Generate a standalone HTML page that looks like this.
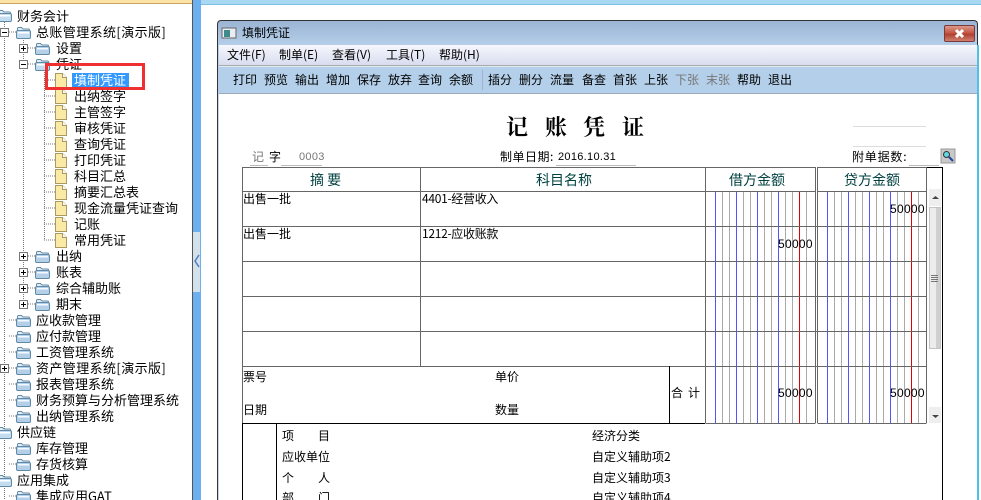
<!DOCTYPE html>
<html><head><meta charset="utf-8">
<style>
html,body{margin:0;padding:0;background:#fff}
#r{position:relative;width:981px;height:500px;overflow:hidden;background:#fff;font-family:"WenQuanYi Zen Hei","Noto Sans CJK SC","Liberation Sans",sans-serif;color:#000}
#r span{position:absolute;white-space:pre;line-height:16px;height:16px;font-size:12px}
.b{position:absolute}
.n span{font-size:13px!important}
.h{color:#004040;font-size:14px!important}
.d{color:#777}
.l{font-family:"Liberation Sans",sans-serif!important;letter-spacing:.3px}
.tt{height:24px!important;line-height:24px!important;font-size:22px!important;font-weight:bold;font-family:"Noto Serif CJK SC","Liberation Serif",serif!important}
svg{position:absolute;left:0;top:0}
</style></head><body><div id="r">
<div class="b" style="left:0;top:0;width:192px;height:3px;background:#fbe3a8"></div>
<div class="b" style="left:0;top:3px;width:192px;height:1px;background:#c8a860"></div>
<div class="b" style="left:192px;top:0;width:9px;height:500px;background:#6cb0f0;border-left:1px solid #555;box-sizing:border-box"></div>
<div class="b" style="left:193px;top:232px;width:7px;height:60px;background:#d4e0ea"></div>
<div class="b" style="left:201px;top:0;width:780px;height:4px;background:#a9d8f2;border-bottom:1px solid #7cc0e4"></div>
<div class="b" style="left:217px;top:20px;width:761px;height:480px;border:1px solid #333;border-bottom:0;border-radius:4px 4px 0 0;box-sizing:border-box;background:linear-gradient(#9bb4d4,#b6d0ea 25px)"></div>
<div class="b" style="left:219px;top:45px;width:758px;height:20px;background:linear-gradient(#f6f8fd,#d8dcef)"></div>
<div class="b" style="left:219px;top:65px;width:758px;height:1px;background:#aaa"></div>
<div class="b" style="left:219px;top:66px;width:758px;height:27px;background:#b3cfe9;border-top:1px solid #dfe8f4;box-sizing:border-box"></div>
<div class="b" style="left:219px;top:93px;width:758px;height:407px;background:#fff;border-top:1px solid #9ab"></div>
<div class="b" style="left:977px;top:45px;width:2px;height:455px;background:#4fc0ea"></div>
<div class="b" style="left:218px;top:94px;width:1px;height:406px;background:#c5d8ea"></div>
<div class="b" style="left:944px;top:25px;width:31px;height:17px;box-sizing:border-box;border:1px solid #7a3a3a;border-radius:2px;background:linear-gradient(#dc9a8c,#c0503c 50%,#b04030 55%,#d08070)"></div>

<svg width="981" height="500" shape-rendering="crispEdges">
<defs>
<symbol id="f" width="15" height="12" viewBox="0 0 15 12"><path d="M1.500 3.500V1.500a1 1 0 0 1 1-1h3l1.500 1.500h5.500a1 1 0 0 1 1 1v1" fill="#e6eef5" stroke="#5f8aa6" shape-rendering="auto"/><rect x=".5" y="3.500" width="14" height="8" rx="1.500" fill="#b4d0e8" stroke="#5f8aa6" shape-rendering="auto"/><path d="M2 5h11v1.500H2z" fill="#f4f9fd"/></symbol>
<symbol id="o" width="15" height="12" viewBox="0 0 15 12"><path d="M1.500 3.500V1.500a1 1 0 0 1 1-1h3l1.500 1.500h5.500a1 1 0 0 1 1 1v1" fill="#e6eef5" stroke="#5f8aa6" shape-rendering="auto"/><rect x=".5" y="3.500" width="14" height="8" rx="1.500" fill="#c4dcf0" stroke="#5f8aa6" shape-rendering="auto"/><path d="M2 5h11v1.500H2z" fill="#fff"/></symbol>
<symbol id="p" width="12" height="15" viewBox="0 0 12 15"><path d="M.5.5h7l4 4v10H.5z" fill="#fbe9a6" stroke="#a89a60"/><path d="M7.500.5v4h4" fill="#fff" stroke="#a89a60"/></symbol>
<symbol id="x" width="9" height="9" viewBox="0 0 9 9"><rect x=".5" y=".5" width="8" height="8" fill="#fff" stroke="#777"/><path d="M2 4.500h5M4.500 2v5" stroke="#000" fill="none"/></symbol>
<symbol id="m" width="9" height="9" viewBox="0 0 9 9"><rect x=".5" y=".5" width="8" height="8" fill="#fff" stroke="#777"/><path d="M2 4.500h5" stroke="#000" fill="none"/></symbol>
</defs>
<g stroke="#777" stroke-dasharray="1 1" fill="none">
<path d="M4.500 20V500M23.500 36V304M44.500 70V240"/>
<path d="M9 32h7M9 320h7M9 336h7M9 352h7M9 368h7M9 384h7M9 400h7M9 416h7M9 448h7M9 464h7M9 496h7"/>
<path d="M28 48h7M28 64h7M28 256h7M28 272h7M28 288h7M28 304h7"/>
<path d="M44 80h11M44 96h11M44 112h11M44 128h11M44 144h11M44 160h11M44 176h11M44 192h11M44 208h11M44 224h11M44 240h11"/>
</g>
<use href="#o" x="-3" y="10"/><use href="#o" x="16" y="27"/><use href="#f" x="35" y="43"/><use href="#o" x="35" y="59"/>
<use href="#f" x="35" y="251"/><use href="#f" x="35" y="267"/><use href="#f" x="35" y="283"/><use href="#f" x="35" y="299"/>
<use href="#f" x="16" y="315"/><use href="#f" x="16" y="331"/><use href="#f" x="16" y="347"/><use href="#f" x="16" y="363"/><use href="#f" x="16" y="379"/><use href="#f" x="16" y="395"/><use href="#f" x="16" y="411"/>
<use href="#o" x="-3" y="427"/><use href="#f" x="16" y="443"/><use href="#f" x="16" y="459"/><use href="#o" x="-3" y="475"/><use href="#f" x="16" y="491"/>
<use href="#p" x="55" y="73"/><use href="#p" x="55" y="89"/><use href="#p" x="55" y="105"/><use href="#p" x="55" y="121"/><use href="#p" x="55" y="137"/><use href="#p" x="55" y="153"/><use href="#p" x="55" y="169"/><use href="#p" x="55" y="185"/><use href="#p" x="55" y="201"/><use href="#p" x="55" y="217"/><use href="#p" x="55" y="233"/>
<use href="#m" x="0" y="28"/><use href="#x" x="19" y="44"/><use href="#m" x="19" y="60"/><use href="#x" x="19" y="252"/><use href="#x" x="19" y="268"/><use href="#x" x="19" y="284"/><use href="#x" x="19" y="300"/><use href="#x" x="0" y="364"/>
<rect x="72" y="73" width="57" height="16" fill="#3399ff"/>

<rect x="222" y="28" width="14" height="10" fill="#e8eef2" stroke="#666"/><rect x="224" y="30" width="6" height="7" fill="#3f8a8a"/>
<rect x="482" y="70" width="1" height="20" fill="#a8b0d0"/>

<g fill="none" stroke="#ddd"><path d="M853 126.500h73M853 146.500h73"/></g>
<g fill="none" stroke="#bbb"><path d="M250 165.500h18M281 165.500h41M556 165.500h80M909 165.500h30"/></g>

<g fill="none" stroke="#aaa">
<path d="M722.500 191V423M729.500 191V423M743.500 191V423M750.500 191V423M764.500 191V423M771.500 191V423M785.500 191V423M792.500 191V423M806.500 191V423M834.500 191V423M841.500 191V423M855.500 191V423M862.500 191V423M876.500 191V423M883.500 191V423M897.500 191V423M904.500 191V423M918.500 191V423"/>
</g>
<g fill="none" stroke="#5555ff"><path d="M715.500 191V423M736.500 191V423M757.500 191V423M778.500 191V423M827.500 191V423M848.500 191V423M869.500 191V423M890.500 191V423"/></g>
<g fill="none" stroke="#e00000"><path d="M799.500 191V423M911.500 191V423"/></g>
<g fill="none" stroke="#666">
<path d="M242.500 167.500H815.500M817.500 167.500H926.500M242.500 191.500H815.500M817.500 191.500H926.500M242.500 226.500H926.500M242.500 261.500H926.500M242.500 296.500H926.500M242.500 331.500H926.500M242.500 366.500H926.500M705.500 423.500H815.500M817.500 423.500H926.500"/>
<path d="M242.500 167V423M420.500 167V366M705.500 167V423M815.500 167V423M817.500 167V423M926.500 167V423"/>
</g>
<path d="M669.500 366V423" stroke="#000"/>
<path d="M243 423.500H705M242.500 423V500M276.500 423V500M942.500 167V500M927 167.500H942" stroke="#000" fill="none"/>

<rect x="929" y="189" width="12" height="17" fill="#eee"/><path d="M932 199h7l-3.500-3z" fill="#444" shape-rendering="auto"/>
<rect x="929.500" y="207.500" width="11" height="141" fill="#ececec" stroke="#c4c4c4"/><rect x="936" y="208" width="4" height="140" fill="#cfcfcf"/>
<path d="M931 275.500h7M931 277.500h7M931 279.500h7M931 281.500h7" stroke="#777"/>
<rect x="929" y="407" width="12" height="16" fill="#eee"/><path d="M932 415h7l-3.500 3z" fill="#444" shape-rendering="auto"/>

<rect x="941" y="149" width="14" height="14" fill="#c8c8c8" stroke="#999"/><circle cx="946.500" cy="154.500" r="3" fill="#5fd8e0" stroke="#333" shape-rendering="auto"/><path d="M949 157l4 4" stroke="#2040a0" stroke-width="2" shape-rendering="auto"/>
<path d="M956 30l7 7M963 30l-7 7" stroke="#fff" stroke-width="3" shape-rendering="auto"/>
</svg>

<div class="n">
<span style="left:17px;top:8px">财务会计</span>
<span style="left:36px;top:24px;letter-spacing:.4px">总账管理系统[演示版]</span>
<span style="left:56px;top:40px">设置</span>
<span style="left:56px;top:56px">凭证</span>
<span style="left:74px;top:72px;color:#fff">填制凭证</span>
<span style="left:74px;top:88px">出纳签字</span>
<span style="left:74px;top:104px">主管签字</span>
<span style="left:74px;top:120px">审核凭证</span>
<span style="left:74px;top:136px">查询凭证</span>
<span style="left:74px;top:152px">打印凭证</span>
<span style="left:74px;top:168px">科目汇总</span>
<span style="left:74px;top:184px">摘要汇总表</span>
<span style="left:74px;top:200px">现金流量凭证查询</span>
<span style="left:74px;top:216px">记账</span>
<span style="left:74px;top:232px">常用凭证</span>
<span style="left:56px;top:248px">出纳</span>
<span style="left:56px;top:264px">账表</span>
<span style="left:56px;top:280px">综合辅助账</span>
<span style="left:56px;top:296px">期末</span>
<span style="left:36px;top:312px">应收款管理</span>
<span style="left:36px;top:328px">应付款管理</span>
<span style="left:36px;top:344px">工资管理系统</span>
<span style="left:36px;top:360px;letter-spacing:.4px">资产管理系统[演示版]</span>
<span style="left:36px;top:376px">报表管理系统</span>
<span style="left:36px;top:392px">财务预算与分析管理系统</span>
<span style="left:36px;top:408px">出纳管理系统</span>
<span style="left:17px;top:424px">供应链</span>
<span style="left:36px;top:440px">库存管理</span>
<span style="left:36px;top:456px">存货核算</span>
<span style="left:17px;top:472px">应用集成</span>
<span style="left:36px;top:488px">集成应用GAT</span>
</div>
<div class="b" style="left:45px;top:63px;width:100px;height:27px;box-sizing:border-box;border:3px solid #f03030"></div>
<svg width="10" height="20" style="left:193px;top:252px"><path d="M6 3L2 9l4 6" fill="none" stroke="#4a80c0" stroke-width="1.500"/></svg>

<span style="left:242px;top:25px">填制凭证</span>
<span style="left:227px;top:47px">文件(F)</span>
<span style="left:279px;top:47px">制单(E)</span>
<span style="left:332px;top:47px">查看(V)</span>
<span style="left:386px;top:47px">工具(T)</span>
<span style="left:439px;top:47px">帮助(H)</span>

<span style="left:233px;top:72px">打印</span><span style="left:264px;top:72px">预览</span><span style="left:295px;top:72px">输出</span><span style="left:326px;top:72px">增加</span><span style="left:357px;top:72px">保存</span><span style="left:388px;top:72px">放弃</span><span style="left:418px;top:72px">查询</span><span style="left:449px;top:72px">余额</span>
<span style="left:488px;top:72px">插分</span><span style="left:519px;top:72px">删分</span><span style="left:550px;top:72px">流量</span><span style="left:582px;top:72px">备查</span><span style="left:613px;top:72px">首张</span><span style="left:644px;top:72px">上张</span><span class="d" style="left:675px;top:72px">下张</span><span class="d" style="left:706px;top:72px">末张</span><span style="left:737px;top:72px">帮助</span><span style="left:768px;top:72px">退出</span>

<span class="tt" style="left:506px;top:115px">记</span>
<span class="tt" style="left:545px;top:115px">账</span>
<span class="tt" style="left:583px;top:115px">凭</span>
<span class="tt" style="left:622px;top:115px">证</span>

<span class="d" style="left:252px;top:149px">记</span><span style="left:269px;top:149px">字</span>
<span class="l d" style="left:299px;top:149px;font-size:11px">0003</span>
<span style="left:500px;top:149px;letter-spacing:.5px">制单日期:</span>
<span class="l" style="left:558px;top:149px;font-size:11px">2016.10.31</span>
<span style="left:852px;top:149px;letter-spacing:.8px">附单据数:</span>

<span class="h" style="left:310px;top:172px">摘 要</span>
<span class="h" style="left:536px;top:172px">科目名称</span>
<span class="h" style="left:729px;top:172px">借方金额</span>
<span class="h" style="left:844px;top:172px">贷方金额</span>

<span style="left:243px;top:191px">出售一批</span>
<span style="left:243px;top:226px">出售一批</span>
<span style="left:422px;top:191px;letter-spacing:-.3px">4401-经营收入</span>
<span style="left:422px;top:226px;letter-spacing:-.3px">1212-应收账款</span>
<span class="l" style="left:890px;top:201px">50000</span>
<span class="l" style="left:778px;top:236px">50000</span>
<span class="l" style="left:778px;top:385px">50000</span>
<span class="l" style="left:890px;top:385px">50000</span>
<span style="left:243px;top:369px">票号</span>
<span style="left:243px;top:402px">日期</span>
<span style="left:495px;top:369px">单价</span>
<span style="left:495px;top:402px">数量</span>
<span style="left:671px;top:385px">合</span><span style="left:688px;top:385px">计</span>

<span style="left:282px;top:428px">项</span><span style="left:318px;top:428px">目</span>
<span style="left:282px;top:449px">应收单位</span>
<span style="left:282px;top:470px">个</span><span style="left:318px;top:470px">人</span>
<span style="left:282px;top:490px">部</span><span style="left:318px;top:490px">门</span>
<span style="left:592px;top:428px">经济分类</span>
<span style="left:592px;top:449px">自定义辅助项2</span>
<span style="left:592px;top:470px">自定义辅助项3</span>
<span style="left:592px;top:490px">自定义辅助项4</span>
</div></body></html>
